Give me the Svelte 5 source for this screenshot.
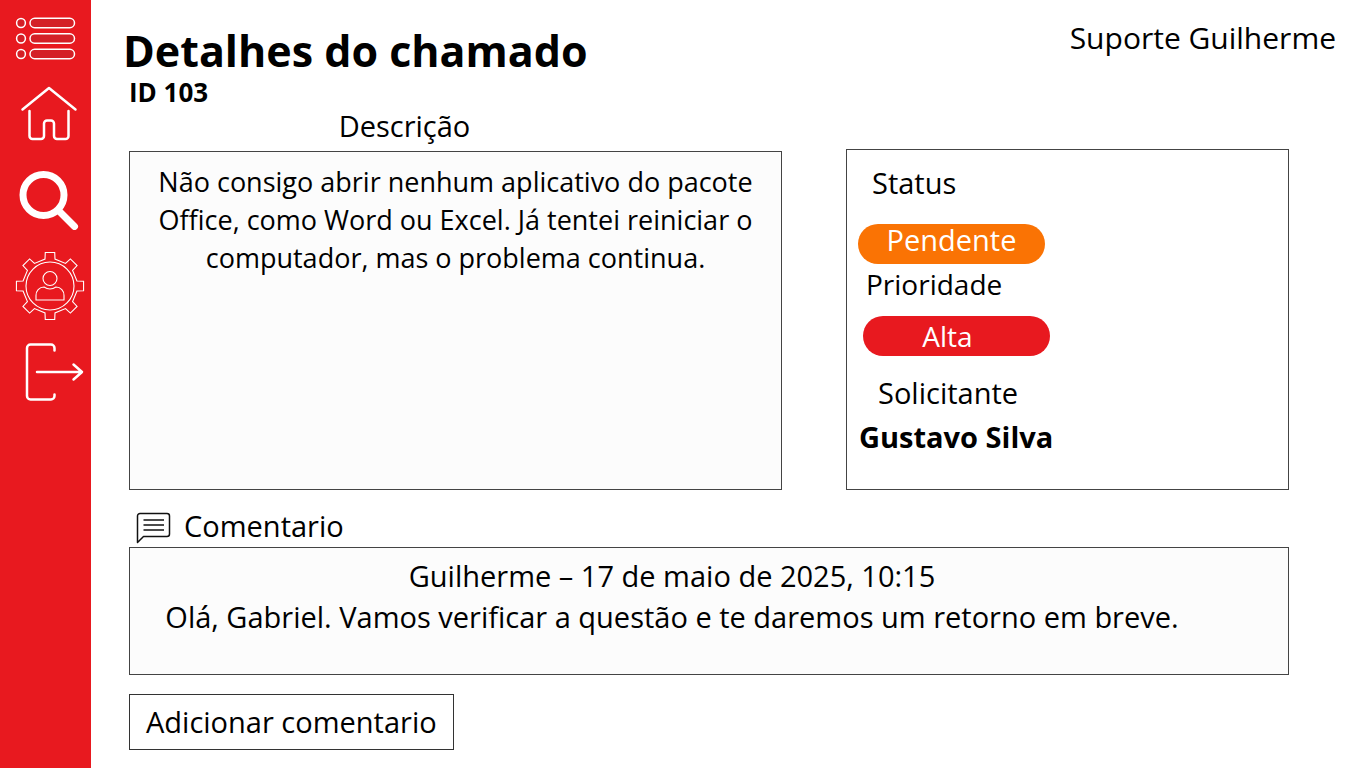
<script>
  const ticket = {
    id: 103,
    description:
      'Não consigo abrir nenhum aplicativo do pacote Office, como Word ou Excel. Já tentei reiniciar o computador, mas o problema continua.',
    status: 'Pendente',
    priority: 'Alta',
    requester: 'Gustavo Silva'
  };
  const comments = [
    {
      heading: 'Guilherme – 17 de maio de 2025, 10:15',
      text: 'Olá, Gabriel. Vamos verificar a questão e te daremos um retorno em breve.'
    }
  ];
  const teeth = [0, 45, 90, 135, 180, 225, 270, 315];
  // One eighth of the gear outline per step, in polar form around the centre.
  const point = (r, deg) => {
    const a = (deg * Math.PI) / 180;
    return `${(35 + r * Math.sin(a)).toFixed(2)} ${(35 - r * Math.cos(a)).toFixed(2)}`;
  };
  const gear =
    'M' +
    teeth
      .map((t) => [point(27.4, t - 10.5), point(33.9, t - 8), point(33.9, t + 8), point(27.4, t + 10.5)].join('L'))
      .join('L') +
    'Z';
</script>

<div class="page">
  <nav class="sidebar" aria-label="Principal">
    <a href="#menu" aria-label="Menu">
      <svg class="menu" width="62" height="44" viewBox="0 0 62 44">
        {#each [6, 21.5, 37] as y}
          <circle cx="6" cy={y} r="4.4" />
          <rect x="15" y={y - 4.7} width="44.5" height="9.4" rx="4.7" />
        {/each}
      </svg>
    </a>
    <a href="#inicio" aria-label="Início">
      <svg class="home" width="58" height="56" viewBox="0 0 58 56">
        <path d="M2.5 24.5 29 3 55.5 24.5M9.500 26V51a3 3 0 0 0 3 3H21a3 3 0 0 0 3-3V38.500a3 3 0 0 1 3-3h4a3 3 0 0 1 3 3V51a3 3 0 0 0 3 3h8.500a3 3 0 0 0 3-3V26" />
      </svg>
    </a>
    <a href="#buscar" aria-label="Buscar">
      <svg class="search" width="60" height="60" viewBox="0 0 60 60">
        <circle cx="24.500" cy="25" r="20.500" />
        <path d="M39.500 40.500 55.500 56.500" />
      </svg>
    </a>
    <a href="#conta" aria-label="Configurações da conta">
      <svg class="account" width="70" height="70" viewBox="0 0 70 70">
        <path d={gear} />
        <circle cx="35" cy="35" r="24" />
        <circle cx="35" cy="27.5" r="7" />
        <path d="M21 49V44.500a8 8 0 0 1 8-8.500q6 4 12 0a8 8 0 0 1 8 8.500V49Z" />
      </svg>
    </a>
    <a href="#sair" aria-label="Sair">
      <svg class="exit" width="60" height="60" viewBox="0 0 60 60">
        <path d="M30.500 8.500V6a3.500 3.500 0 0 0-3.500-3.500H6.500A3.500 3.500 0 0 0 3 6V54a3.500 3.500 0 0 0 3.500 3.500H27a3.500 3.500 0 0 0 3.500-3.500V52.500M13 30H57M49.500 22.500 58 30 49.500 37.500" />
      </svg>
    </a>
  </nav>

  <div class="content">
    <header>
      <h1>Detalhes do chamado</h1>
      <span class="user">Suporte Guilherme</span>
    </header>

    <main>
      <p class="ticket-id">ID {ticket.id}</p>
      <div class="columns">
        <section class="description">
          <h2>Descrição</h2>
          <p>{ticket.description}</p>
        </section>
        <dl class="info">
          <dt class="status-label">Status</dt>
          <dd class="pill pending">{ticket.status}</dd>
          <dt class="priority-label">Prioridade</dt>
          <dd class="pill high">{ticket.priority}</dd>
          <dt class="requester-label">Solicitante</dt>
          <dd class="requester">{ticket.requester}</dd>
        </dl>
      </div>

      <section class="comments">
        <h2>
          <svg width="36" height="32" viewBox="0 0 36 32" aria-hidden="true">
            <path d="M1.500 30.500V4a2.500 2.500 0 0 1 2.500-2.500H31A2.500 2.500 0 0 1 33.500 4V22a2.500 2.500 0 0 1-2.500 2.500H7.500ZM7.500 8H28M7.500 13H28M7.500 18H28" />
          </svg>
          Comentario
        </h2>
        {#each comments as comment}
          <article>
            <p>{comment.heading}</p>
            <p>{comment.text}</p>
          </article>
        {/each}
      </section>

      <button type="button">Adicionar comentario</button>
    </main>
  </div>
</div>

<style>
  :global(body) {
    margin: 0;
    background: #fff;
  }
  .page {
    display: flex;
    min-height: 100vh;
    box-sizing: border-box;
    color: #000;
    font: 29px/40px 'Open Sans', sans-serif;
  }
  h1, h2, p, dl, dd {
    margin: 0;
  }
  h2 {
    font-size: 29px;
    font-weight: 400;
  }
  .sidebar {
    display: flex;
    flex: none;
    flex-direction: column;
    align-items: center;
    width: 91px;
    padding-top: 17px;
    box-sizing: border-box;
    background: #e8191f;
  }
  .sidebar a {
    display: flex;
  }
  .sidebar svg {
    fill: none;
    stroke: #fff;
    stroke-linecap: round;
    stroke-linejoin: round;
  }
  .sidebar .menu {
    stroke-width: 1.5;
    fill: #d42027;
  }
  .sidebar .home {
    margin: 24px 0 0 6px;
    stroke-width: 2.5;
  }
  .sidebar .search {
    margin: 29px 0 0 6px;
    stroke-width: 7;
  }
  .sidebar .account {
    margin: 21px 0 0 8px;
    stroke-width: 1.1;
    stroke-linejoin: miter;
  }
  .sidebar .exit {
    margin: 21px 0 0 16px;
    stroke-width: 2.5;
  }
  .content {
    flex: 1;
    min-width: 0;
  }
  header {
    display: flex;
    justify-content: space-between;
    padding: 18px 30px 0 32px;
  }
  h1 {
    padding-top: 9px;
    font-size: 43px;
    line-height: 48px;
  }
  .user {
    font-size: 30px;
  }
  main {
    padding: 0 77px 17px 38px;
  }
  .ticket-id {
    padding-top: 2px;
    font-size: 26px;
    font-weight: 700;
    line-height: 30px;
  }
  .columns {
    display: grid;
    grid-template-columns: 653fr 443fr;
    gap: 64px;
  }
  .description {
    display: flex;
    flex-direction: column;
  }
  .description h2 {
    padding: 0 102px 6px 0;
    line-height: 38px;
    text-align: center;
  }
  .description p {
    flex: 1;
    padding: 11px 24px;
    border: 1px solid #444;
    background: #fcfcfc;
    font-size: 27px;
    line-height: 38px;
    text-align: center;
  }
  .info {
    min-height: 326px;
    margin-top: 42px;
    padding: 13px 11px 0;
    border: 1px solid #444;
  }
  .status-label {
    padding-left: 14px;
  }
  .priority-label {
    padding-left: 8px;
    font-size: 28px;
  }
  .requester-label {
    padding: 17px 0 0 20px;
  }
  .pill {
    width: 187px;
    height: 40px;
    box-sizing: border-box;
    border-radius: 20px;
    color: #fff;
    line-height: 32px;
    text-align: center;
  }
  .pending {
    margin-top: 21px;
    background: #fa7304;
  }
  .high {
    margin: 12px 0 0 5px;
    padding-right: 18px;
    background: #e8191f;
    font-size: 28px;
    line-height: 40px;
  }
  .requester {
    padding: 4px 0 0 1px;
    font-weight: 700;
  }
  .comments {
    padding-top: 16px;
  }
  .comments h2 {
    display: flex;
    align-items: center;
    gap: 12px;
    padding: 0 0 1px 7px;
  }
  .comments svg {
    padding-top: 3px;
    fill: none;
    stroke: #111;
    stroke-width: 1.5;
    stroke-linejoin: round;
  }
  article {
    min-height: 111px;
    padding: 7px 98px 8px 24px;
    border: 1px solid #444;
    background: #fcfcfc;
    line-height: 41px;
    text-align: center;
  }
  button {
    display: block;
    margin-top: 19px;
    padding: 7px 16px;
    border: 1px solid #333;
    background: #fff;
    color: inherit;
    font: inherit;
  }
</style>
